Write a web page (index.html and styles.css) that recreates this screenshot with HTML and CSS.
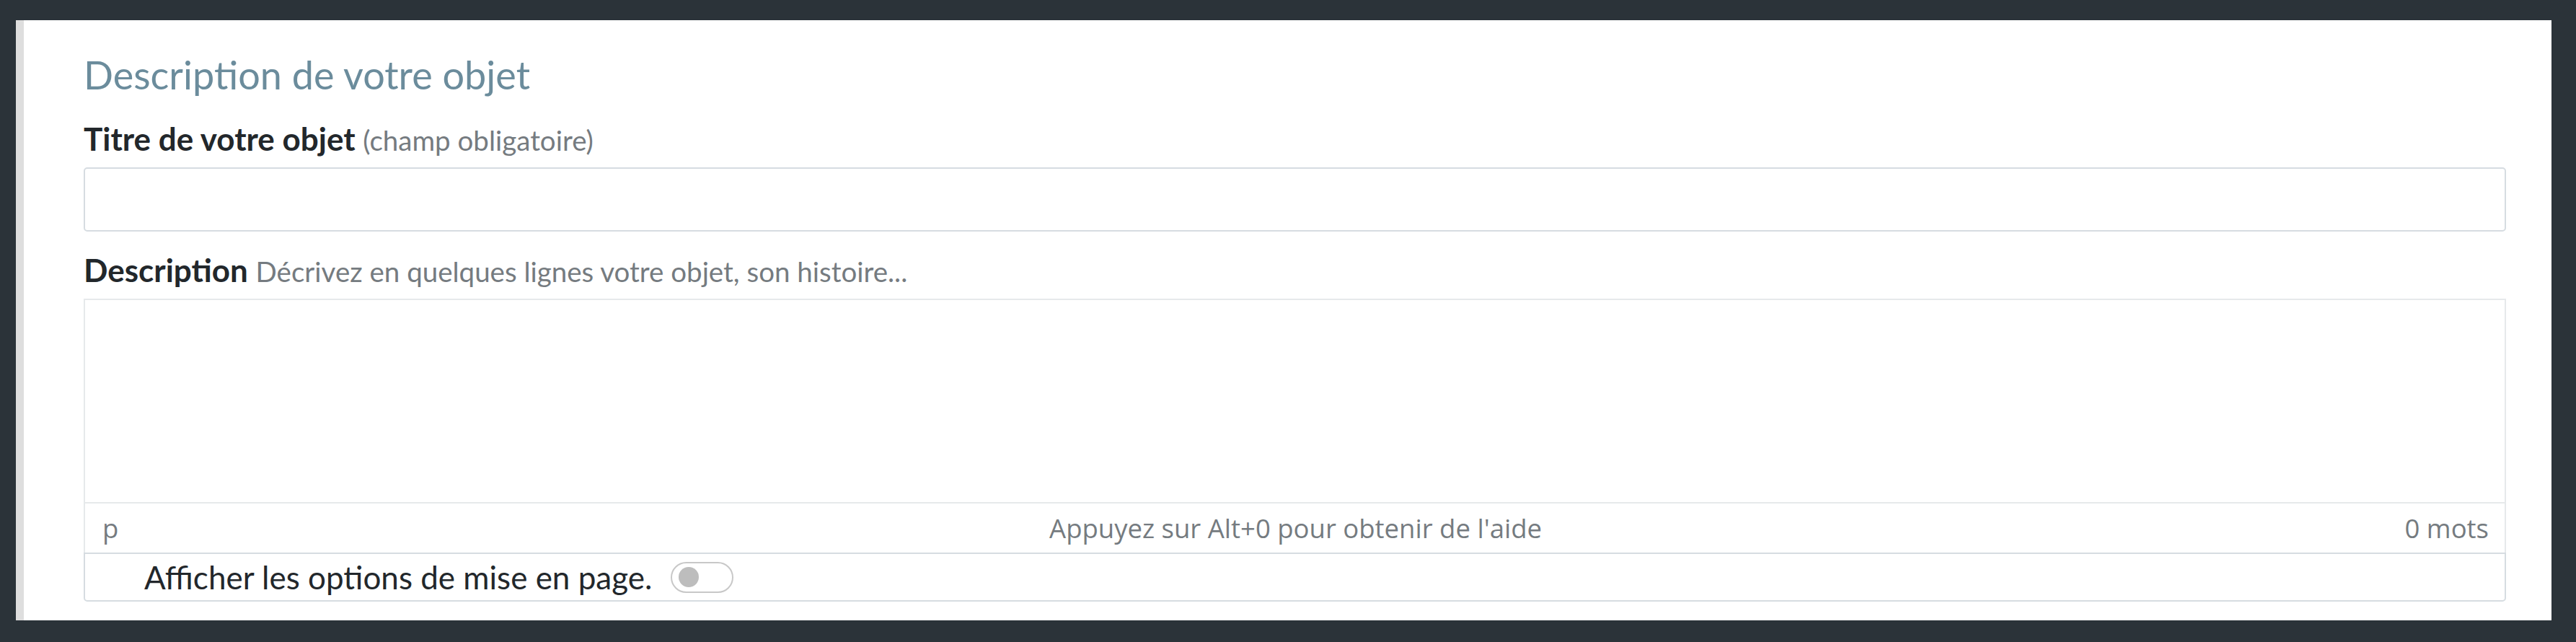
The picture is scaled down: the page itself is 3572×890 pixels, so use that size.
FILE: index.html
```html
<!DOCTYPE html>
<html lang="fr">
    <head>
        <meta charset="UTF-8">
        <title>Description de votre objet</title>
        <link rel="stylesheet" href="styles.css">
    </head>

    <body class="page">
        <section class="panel">
            <h2 class="panel__title">Description de votre objet</h2>

            <div class="field">
                <label class="field__label" for="titre">Titre de votre objet <span class="field__hint">(champ obligatoire)</span></label>
                <input class="field__input" id="titre" type="text">
            </div>

            <div class="field">
                <label class="field__label">Description <span class="field__hint">Décrivez en quelques lignes votre objet, son histoire...</span></label>
                <div class="editor">
                    <div class="editor__content"></div>
                    <div class="editor__status">
                        <span class="editor__status__path">p</span>
                        <span class="editor__status__help">Appuyez sur Alt+0 pour obtenir de l'aide</span>
                        <span class="editor__status__count">0 mots</span>
                    </div>
                </div>
                <div class="options">
                    <span class="options__label">Afficher les options de mise en page.</span>
                    <span class="toggle"><span class="toggle__knob"></span></span>
                </div>
            </div>
        </section>
    </body>
</html>
```

FILE: styles.css
```css
html,
body {
    border: none;
    margin: 0 0 0 0;
    padding: 0 0 0 0;
}

:root {
    --color-backdrop: #2b3339;
    --color-panel: #ffffff;
    --color-panel-edge: #dedede;
    --color-title: #6b8c9c;
    --color-text: #22272b;
    --color-muted: #757b80;
    --color-border: #d6dce1;
    --color-border-light: #e6e9eb;
}

.page {
    background-color: var(--color-backdrop);
    font-family: Lato, "Noto Sans", sans-serif;
    height: 890px;
    overflow: hidden;
    padding: 28px 34px 0 22px;
    box-sizing: border-box;
}

.panel {
    background-color: var(--color-panel);
    border-left: 11px solid var(--color-panel-edge);
    box-sizing: border-box;
    height: 832px;
    padding: 45px 63px 0 83px;
}

.panel__title {
    color: var(--color-title);
    font-size: 54px;
    font-weight: 400;
    line-height: 62px;
    margin: 0 0 30px 0;
}

.field__label {
    color: var(--color-text);
    display: block;
    font-size: 44px;
    font-weight: 700;
    line-height: 55px;
    margin: 0 0 10px 0;
}

.field__hint {
    color: var(--color-muted);
    font-size: 38.5px;
    font-weight: 400;
}

.field__input {
    border: 2px solid var(--color-border);
    border-radius: 5px;
    box-sizing: border-box;
    display: block;
    height: 89px;
    margin: 0 0 26px 0;
    width: 100%;
}

.editor {
    border: 2px solid var(--color-border-light);
    border-bottom: none;
}

.editor__content {
    height: 280px;
}

.editor__status {
    align-items: center;
    border-top: 2px solid var(--color-border-light);
    color: var(--color-muted);
    display: flex;
    font-family: "Open Sans", "Noto Sans", sans-serif;
    font-size: 36.5px;
    height: 68px;
    justify-content: space-between;
    padding: 0 22px 0 24px;
}

.editor__status__path,
.editor__status__count {
    flex: 1 1 0;
}

.editor__status__count {
    text-align: right;
}

.options {
    align-items: center;
    border: 2px solid var(--color-border);
    border-radius: 0 0 5px 5px;
    box-sizing: border-box;
    display: flex;
    gap: 26px;
    height: 68px;
    padding: 0 0 0 82px;
}

.options__label {
    color: var(--color-text);
    font-size: 44px;
}

.toggle {
    border: 2px solid #c8c8c8;
    border-radius: 22px;
    box-sizing: border-box;
    display: inline-block;
    height: 43px;
    padding: 5px 0 0 9px;
    width: 87px;
}

.toggle__knob {
    background-color: #bdbdbd;
    border-radius: 50%;
    display: block;
    height: 28px;
    width: 28px;
}
```
